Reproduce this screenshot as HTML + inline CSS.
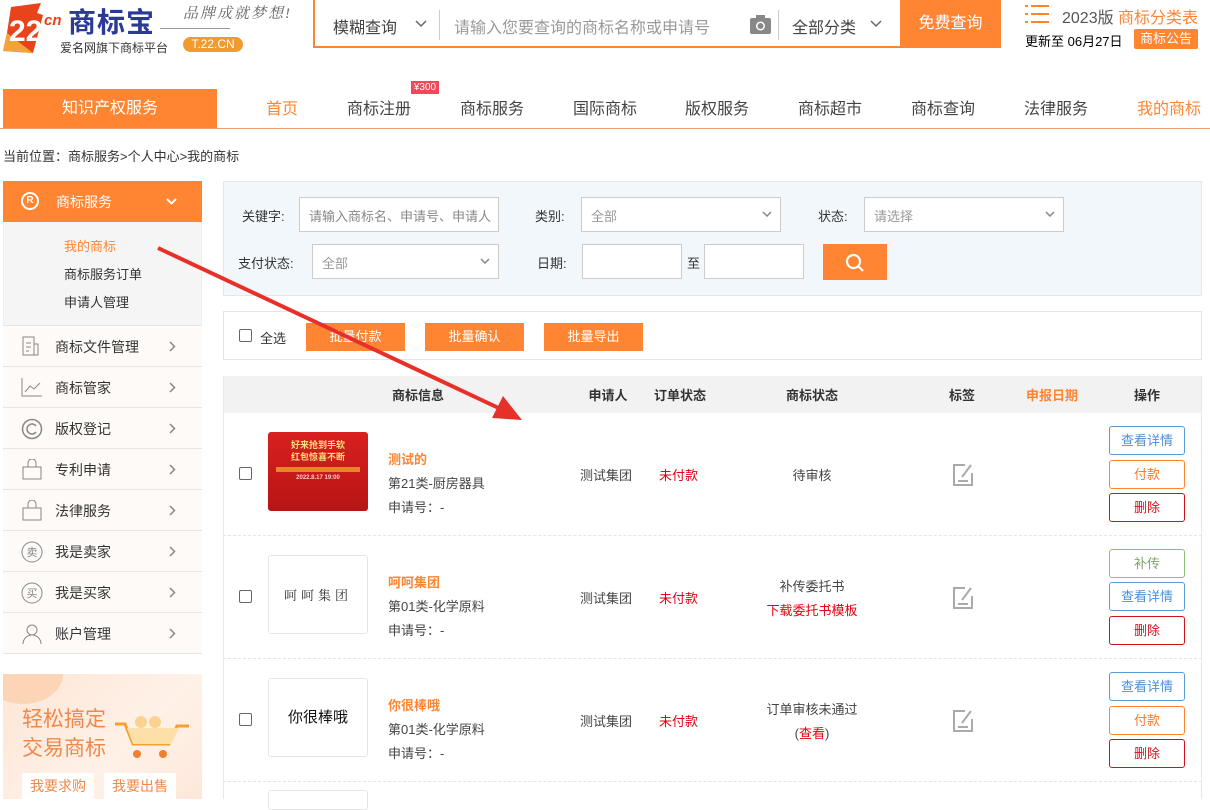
<!DOCTYPE html>
<html><head><meta charset="utf-8"><style>
*{margin:0;padding:0;box-sizing:border-box}
body{width:1210px;height:799px;overflow:hidden;background:#fff;font-family:"Liberation Sans","Noto Sans CJK SC",sans-serif;color:#333;font-size:14px;position:relative}
.a{position:absolute}
.or{color:#ff8533}
.nav span{position:absolute;top:95px;font-size:16px;color:#444;transform:translateX(-50%);white-space:nowrap}
.side .it{position:absolute;left:3px;width:199px;height:41px;border-bottom:1px solid #e6e6e6;background:#fdfaf8;font-size:14px;color:#333}
.side .it b{font-weight:normal;position:absolute;left:52px;top:11px}
.side .it svg{position:absolute;left:18px;top:10px}
.side .it svg.ch{left:166px;top:15px}
.lbl{position:absolute;font-size:13px;color:#333}
.inp{position:absolute;background:#fff;border:1px solid #ccc;height:35px;font-size:13px;color:#999;padding:8px 0 0 9px}
.sel svg{position:absolute;right:8px;top:13px}
.btn{position:absolute;background:#ff8533;color:#fff;font-size:13px;text-align:center;line-height:28px;width:99px;height:28px}
.th{position:absolute;top:385px;font-size:13px;font-weight:bold;color:#333;transform:translateX(-50%)}
.row{position:absolute;left:223px;width:979px;height:123px;border-bottom:1px dashed #e5e5e5}
.row .cb{position:absolute;left:16px;width:13px;height:13px;border:1px solid #666;border-radius:2px;top:54px}
.row .img{position:absolute;left:45px;top:19px;width:100px;height:79px;border:1px solid #e5e5e5;border-radius:3px;text-align:center}
.row .t1{position:absolute;left:165px;top:36px;font-size:13px;color:#ff8533;font-weight:bold}
.row .t2{position:absolute;left:165px;top:60px;font-size:13px;color:#444}
.row .t3{position:absolute;left:165px;top:84px;font-size:13px;color:#444}
.row .ap{position:absolute;left:357px;top:52px;font-size:13px;color:#444}
.row .os{position:absolute;left:436px;top:52px;font-size:13px;color:#e60012}
.row .ms{position:absolute;left:589px;width:0;font-size:13px;color:#444;top:52px}
.row .ms div{position:absolute;white-space:nowrap;transform:translateX(-50%)}
.row .tag{position:absolute;left:729px;top:50px}
.ob{position:absolute;left:886px;width:76px;height:29px;border:1px solid;border-radius:3px;text-align:center;line-height:27px;font-size:13px;background:#fff}
.bl{border-color:#5b9bd5;color:#4a8fd8}.oo{border-color:#ff8533;color:#ff7a22}.rd{border-color:#d0121b;color:#d0121b}.gr{border-color:#8cbf7a;color:#7aa866}
</style></head><body>

<!-- logo -->
<svg class="a" style="left:3px;top:3px" width="60" height="50" viewBox="0 0 60 50"><polygon points="8,4 38,0 34,10 40,12 30,50 0,48 4,30" fill="#e8431a"/><polygon points="4,30 30,50 0,48" fill="#f2a33a"/><text x="6" y="38" font-size="30" font-weight="bold" fill="#fff" font-family="Liberation Sans">22</text></svg>
<div class="a" style="left:44px;top:12px;font-size:15px;color:#e8431a;font-style:italic;font-weight:bold">cn</div>
<div class="a" style="left:68px;top:1px;font-size:28px;font-weight:bold;color:#2a3a96;letter-spacing:1px">商标宝</div>
<div class="a" style="left:60px;top:39px;font-size:12px;color:#333">爱名网旗下商标平台</div>
<div class="a" style="left:183px;top:2px;font-size:15px;color:#666;font-style:italic;letter-spacing:2px;font-family:'Liberation Serif','Noto Serif CJK SC',serif">品牌成就梦想!</div>
<div class="a" style="left:160px;top:28px;width:70px;height:1px;background:#999"></div>
<div class="a" style="left:183px;top:37px;width:60px;height:15px;border-radius:8px;background:#f39a2f;color:#fff;font-size:12px;text-align:center;line-height:15px">T.22.CN</div>

<!-- search -->
<div class="a" style="left:313px;top:0;width:688px;height:48px;border:2px solid #ff8533;border-top:none;background:#fff"></div>
<div class="a" style="left:333px;top:14px;font-size:16px;color:#444">模糊查询</div>
<svg class="a" style="left:415px;top:20px" width="12" height="8" viewBox="0 0 12 8" fill="none" stroke="#666" stroke-width="1.5"><path d="M1 1l5 5 5-5"/></svg>
<div class="a" style="left:439px;top:10px;width:1px;height:30px;background:#ccc"></div>
<div class="a" style="left:454px;top:14px;font-size:16px;color:#999">请输入您要查询的商标名称或申请号</div>
<svg class="a" style="left:750px;top:15px" width="21" height="19" viewBox="0 0 21 19"><rect x="0" y="3" width="21" height="16" rx="2" fill="#888"/><rect x="6" y="0" width="9" height="5" fill="#888"/><circle cx="10.5" cy="11" r="4.5" fill="#fff"/><circle cx="10.5" cy="11" r="3" fill="#888"/></svg>
<div class="a" style="left:778px;top:10px;width:1px;height:30px;background:#ccc"></div>
<div class="a" style="left:792px;top:14px;font-size:16px;color:#444">全部分类</div>
<svg class="a" style="left:870px;top:20px" width="12" height="8" viewBox="0 0 12 8" fill="none" stroke="#666" stroke-width="1.5"><path d="M1 1l5 5 5-5"/></svg>
<div class="a" style="left:900px;top:0;width:101px;height:48px;background:#ff8533;color:#fff;font-size:16px;text-align:center;line-height:48px">免费查询</div>
<svg class="a" style="left:1025px;top:4px" width="24" height="20" viewBox="0 0 24 20" stroke="#ff8533" stroke-width="2"><path d="M0 2h3M6 2h18M0 10h3M6 10h18M0 18h3M6 18h18"/></svg>
<div class="a" style="left:1062px;top:4px;font-size:16px;color:#555">2023版 <span class="or">商标分类表</span></div>
<div class="a" style="left:1025px;top:31px;font-size:13px;color:#000">更新至 06月27日</div>
<div class="a" style="left:1134px;top:29px;width:64px;height:20px;background:#ff8533;color:#fff;font-size:13px;text-align:center;line-height:20px;border-radius:2px">商标公告</div>

<!-- nav -->
<div class="a" style="left:3px;top:89px;width:214px;height:40px;background:#ff8533;color:#fff;font-size:16px;text-align:center;line-height:40px">知识产权服务</div>
<div class="a" style="left:0;top:128px;width:1210px;height:1px;background:#f0a070"></div>
<div class="nav"><span style="left:282px;color:#ff8533">首页</span><span style="left:379px">商标注册</span><span style="left:492px">商标服务</span><span style="left:605px">国际商标</span><span style="left:717px">版权服务</span><span style="left:830px">商标超市</span><span style="left:943px">商标查询</span><span style="left:1056px">法律服务</span><span style="left:1169px;color:#ff8533">我的商标</span></div>
<div class="a" style="left:411px;top:81px;width:28px;height:13px;background:#f2485a;color:#fff;font-size:10px;line-height:13px;text-align:center">¥300</div>

<div class="a" style="left:3px;top:146px;font-size:13px;color:#333">当前位置：商标服务&gt;个人中心&gt;我的商标</div>

<!-- sidebar -->
<div class="side">
<div class="a" style="left:3px;top:181px;width:199px;height:41px;background:#ff8533;color:#fff"></div>
<div class="a" style="left:21px;top:192px;width:18px;height:18px;border:2px solid #fff;border-radius:50%;color:#fff;font-size:10px;text-align:center;line-height:14px;font-weight:bold">R</div>
<div class="a" style="left:56px;top:192px;color:#fff;font-size:14px">商标服务</div>
<svg class="a" style="left:166px;top:198px" width="11" height="7" viewBox="0 0 11 7" fill="none" stroke="#fff" stroke-width="2"><path d="M1 1l4.5 4.5L10 1"/></svg>
<div class="a" style="left:3px;top:222px;width:199px;height:104px;background:#f5f5f5;border-bottom:1px solid #e6e6e6;border-left:1px solid #eee;border-right:1px solid #eee"></div>
<div class="a" style="left:64px;top:236px;font-size:13px;color:#ff8533">我的商标</div>
<div class="a" style="left:64px;top:264px;font-size:13px">商标服务订单</div>
<div class="a" style="left:64px;top:292px;font-size:13px">申请人管理</div>
<div class="it" style="top:326px"><svg width="20" height="20" viewBox="0 0 20 20" fill="none" stroke="#888"><path d="M2 1h11v18H2z M13 8h4v11h-4 M5 7h5 M5 11h5 M5 15h3"/></svg><b>商标文件管理</b><svg class="ch" width="7" height="11" viewBox="0 0 7 11" fill="none" stroke="#888" stroke-width="1.5"><path d="M1 1l4.5 4.5L1 10"/></svg></div>
<div class="it" style="top:367px"><svg width="22" height="20" viewBox="0 0 22 20" fill="none" stroke="#888"><path d="M1 1v18h20 M4 15l5-6 4 3 6-6"/></svg><b>商标管家</b><svg class="ch" width="7" height="11" viewBox="0 0 7 11" fill="none" stroke="#888" stroke-width="1.5"><path d="M1 1l4.5 4.5L1 10"/></svg></div>
<div class="it" style="top:408px"><svg width="22" height="22" viewBox="0 0 22 22" fill="none" stroke="#888" stroke-width="1.5"><circle cx="11" cy="11" r="9.5"/><path d="M15 8a5 5 0 1 0 0 6"/></svg><b>版权登记</b><svg class="ch" width="7" height="11" viewBox="0 0 7 11" fill="none" stroke="#888" stroke-width="1.5"><path d="M1 1l4.5 4.5L1 10"/></svg></div>
<div class="it" style="top:449px"><svg width="22" height="22" viewBox="0 0 22 22" fill="none" stroke="#888"><path d="M2 8h18v12H2z M7 8V4a4 4 0 0 1 8 0v4"/></svg><b>专利申请</b><svg class="ch" width="7" height="11" viewBox="0 0 7 11" fill="none" stroke="#888" stroke-width="1.5"><path d="M1 1l4.5 4.5L1 10"/></svg></div>
<div class="it" style="top:490px"><svg width="22" height="22" viewBox="0 0 22 22" fill="none" stroke="#888"><path d="M2 8h18v12H2z M7 8V4a4 4 0 0 1 8 0v4"/></svg><b>法律服务</b><svg class="ch" width="7" height="11" viewBox="0 0 7 11" fill="none" stroke="#888" stroke-width="1.5"><path d="M1 1l4.5 4.5L1 10"/></svg></div>
<div class="it" style="top:531px"><svg width="22" height="22" viewBox="0 0 22 22"><circle cx="11" cy="11" r="10" fill="none" stroke="#888"/><text x="11" y="15" font-size="11" text-anchor="middle" fill="#888" font-family="Noto Sans CJK SC">卖</text></svg><b>我是卖家</b><svg class="ch" width="7" height="11" viewBox="0 0 7 11" fill="none" stroke="#888" stroke-width="1.5"><path d="M1 1l4.5 4.5L1 10"/></svg></div>
<div class="it" style="top:572px"><svg width="22" height="22" viewBox="0 0 22 22"><circle cx="11" cy="11" r="10" fill="none" stroke="#888"/><text x="11" y="15" font-size="11" text-anchor="middle" fill="#888" font-family="Noto Sans CJK SC">买</text></svg><b>我是买家</b><svg class="ch" width="7" height="11" viewBox="0 0 7 11" fill="none" stroke="#888" stroke-width="1.5"><path d="M1 1l4.5 4.5L1 10"/></svg></div>
<div class="it" style="top:613px"><svg width="22" height="22" viewBox="0 0 22 22" fill="none" stroke="#888"><circle cx="11" cy="7" r="5"/><path d="M2 21a9 9 0 0 1 18 0"/></svg><b>账户管理</b><svg class="ch" width="7" height="11" viewBox="0 0 7 11" fill="none" stroke="#888" stroke-width="1.5"><path d="M1 1l4.5 4.5L1 10"/></svg></div>
</div>
<div class="a" style="left:3px;top:674px;width:199px;height:125px;background:linear-gradient(135deg,#fde6d6,#fff1e8 60%,#fde8da);overflow:hidden">
<div class="a" style="left:-20px;top:-30px;width:80px;height:60px;border-radius:50%;background:#fcd4b6"></div>
<div class="a" style="left:19px;top:31px;font-size:21px;color:#f0884a;line-height:29px">轻松搞定<br>交易商标</div>
<svg class="a" style="left:112px;top:40px" width="80" height="46" viewBox="0 0 80 46" fill="none"><path d="M0 10h10l8 20h36l8-18h12" stroke="#f5a030" stroke-width="3"/><path d="M12 14h52l-8 16H18z" fill="#fde0a8"/><circle cx="22" cy="40" r="4" fill="#f08030"/><circle cx="48" cy="40" r="4" fill="#f08030"/><circle cx="26" cy="8" r="6" fill="#fbd290"/><circle cx="40" cy="8" r="6" fill="#fbd290"/></svg>
<div class="a" style="left:19px;top:99px;width:72px;height:26px;background:#fff;color:#f0884a;font-size:14px;text-align:center;line-height:26px">我要求购</div>
<div class="a" style="left:101px;top:99px;width:72px;height:26px;background:#fff;color:#f0884a;font-size:14px;text-align:center;line-height:26px">我要出售</div>
</div>

<!-- filter -->
<div class="a" style="left:223px;top:181px;width:979px;height:115px;background:#f2f7fc;border:1px solid #e3e8ee"></div>
<div class="lbl" style="left:242px;top:206px">关键字:</div>
<div class="inp" style="left:299px;top:197px;width:200px;color:#888">请输入商标名、申请号、申请人</div>
<div class="lbl" style="left:535px;top:206px">类别:</div>
<div class="inp sel" style="left:581px;top:197px;width:200px">全部<svg width="10" height="6" viewBox="0 0 10 6" fill="none" stroke="#888" stroke-width="1.5"><path d="M1 1l4 4 4-4"/></svg></div>
<div class="lbl" style="left:818px;top:206px">状态:</div>
<div class="inp sel" style="left:864px;top:197px;width:200px">请选择<svg width="10" height="6" viewBox="0 0 10 6" fill="none" stroke="#888" stroke-width="1.5"><path d="M1 1l4 4 4-4"/></svg></div>
<div class="lbl" style="left:238px;top:253px">支付状态:</div>
<div class="inp sel" style="left:312px;top:244px;width:187px">全部<svg width="10" height="6" viewBox="0 0 10 6" fill="none" stroke="#888" stroke-width="1.5"><path d="M1 1l4 4 4-4"/></svg></div>
<div class="lbl" style="left:537px;top:253px">日期:</div>
<div class="inp" style="left:582px;top:244px;width:100px"></div>
<div class="lbl" style="left:687px;top:253px">至</div>
<div class="inp" style="left:704px;top:244px;width:100px"></div>
<div class="a" style="left:823px;top:244px;width:64px;height:36px;background:#ff8533"></div>
<svg class="a" style="left:845px;top:253px" width="20" height="20" viewBox="0 0 20 20" fill="none" stroke="#fff" stroke-width="2.2"><circle cx="8.5" cy="8.5" r="6.5"/><path d="M13 13l5 5"/></svg>

<!-- toolbar -->
<div class="a" style="left:223px;top:311px;width:979px;height:49px;border:1px solid #e5e5e5"></div>
<div class="a" style="left:239px;top:329px;width:13px;height:13px;border:1px solid #666;border-radius:2px"></div>
<div class="lbl" style="left:260px;top:328px">全选</div>
<div class="btn" style="left:306px;top:323px">批量付款</div>
<div class="btn" style="left:425px;top:323px">批量确认</div>
<div class="btn" style="left:544px;top:323px">批量导出</div>

<!-- table -->
<div class="a" style="left:223px;top:376px;width:979px;height:37px;background:#f2f2f2"></div>
<div class="a" style="left:223px;top:376px;width:1px;height:423px;background:#e8e8e8"></div>
<div class="a" style="left:1201px;top:376px;width:1px;height:423px;background:#e8e8e8"></div>
<div class="th" style="left:418px">商标信息</div>
<div class="th" style="left:608px">申请人</div>
<div class="th" style="left:680px">订单状态</div>
<div class="th" style="left:812px">商标状态</div>
<div class="th" style="left:962px">标签</div>
<div class="th" style="left:1052px;color:#ff8533">申报日期</div>
<div class="th" style="left:1147px">操作</div>

<div class="row" style="top:413px">
<div class="cb"></div>
<div class="img" style="background:linear-gradient(#d8201f,#b81414);border:none;top:19px;color:#ffdf80;font-size:9px;font-weight:bold;padding-top:7px;line-height:12px">好来抢到手软<br>红包惊喜不断<div style="margin:4px 8px 0;height:5px;background:#e9862a"></div><div style="font-size:6px;color:#fcc">2022.8.17 19:00</div></div>
<div class="t1">测试的</div><div class="t2">第21类-厨房器具</div><div class="t3">申请号：-</div>
<div class="ap">测试集团</div><div class="os">未付款</div>
<div class="ms"><div>待审核</div></div>
<svg class="tag" width="22" height="24" viewBox="0 0 22 24" fill="none" stroke="#aaa" stroke-width="2"><path d="M13 2H2v20h18V10"/><path d="M19 2l-9 12 M6 18h10"/></svg>
<div class="ob bl" style="top:13px">查看详情</div><div class="ob oo" style="top:47px">付款</div><div class="ob rd" style="top:80px">删除</div>
</div>
<div class="row" style="top:536px">
<div class="cb"></div>
<div class="img" style="font-size:13px;line-height:77px;letter-spacing:4px;color:#333;font-family:'Noto Serif CJK SC',serif">呵呵集团</div>
<div class="t1">呵呵集团</div><div class="t2">第01类-化学原料</div><div class="t3">申请号：-</div>
<div class="ap">测试集团</div><div class="os">未付款</div>
<div class="ms" style="top:40px"><div>补传委托书</div><div style="top:24px;color:#e60012">下载委托书模板</div></div>
<svg class="tag" width="22" height="24" viewBox="0 0 22 24" fill="none" stroke="#aaa" stroke-width="2"><path d="M13 2H2v20h18V10"/><path d="M19 2l-9 12 M6 18h10"/></svg>
<div class="ob gr" style="top:13px">补传</div><div class="ob bl" style="top:46px">查看详情</div><div class="ob rd" style="top:80px">删除</div>
</div>
<div class="row" style="top:659px">
<div class="cb"></div>
<div class="img" style="font-size:15px;line-height:77px;color:#111">你很棒哦</div>
<div class="t1">你很棒哦</div><div class="t2">第01类-化学原料</div><div class="t3">申请号：-</div>
<div class="ap">测试集团</div><div class="os">未付款</div>
<div class="ms" style="top:40px"><div>订单审核未通过</div><div style="top:24px">(<span style="color:#e60012">查看</span>)</div></div>
<svg class="tag" width="22" height="24" viewBox="0 0 22 24" fill="none" stroke="#aaa" stroke-width="2"><path d="M13 2H2v20h18V10"/><path d="M19 2l-9 12 M6 18h10"/></svg>
<div class="ob bl" style="top:13px">查看详情</div><div class="ob oo" style="top:47px">付款</div><div class="ob rd" style="top:80px">删除</div>
</div>
<div class="a" style="left:268px;top:790px;width:100px;height:20px;border:1px solid #e5e5e5;border-radius:3px"></div>

<!-- red arrow -->
<svg class="a" style="left:0;top:0" width="1210" height="799"><line x1="158" y1="248" x2="505" y2="411" stroke="#e8302a" stroke-width="4"/><polygon points="522,420 492,418 503,396" fill="#e8302a"/></svg>
</body></html>
